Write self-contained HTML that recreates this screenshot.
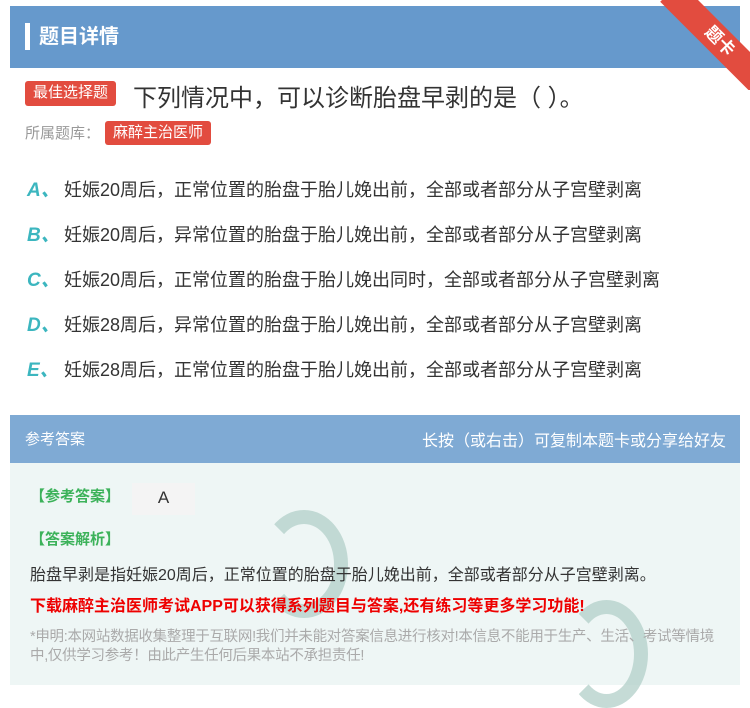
<!DOCTYPE html><html><head><meta charset="utf-8"><style>
body{margin:0;width:750px;height:685px;background:#fff;font-family:"Liberation Sans","Noto Sans CJK SC",sans-serif;position:relative;overflow:hidden}
.a{position:absolute;white-space:nowrap}
.hd{left:10px;top:6px;width:730px;height:62px;background:#6699cc}
.tag{background:#e24c3f;color:#fff;border-radius:3px}
.opt{font-size:18px;color:#333;left:27px}
.opt b{color:#3cb6bf;font-style:italic;font-size:19px;display:inline-block;width:37px;font-weight:bold}
</style></head><body>
<div class="a hd"></div>
<div class="a" style="left:25px;top:23px;width:5px;height:27px;background:#fff"></div>
<div class="a" style="left:39px;top:20px;color:#fff;font-size:20px;font-weight:bold">题目详情</div>
<div class="a" style="left:660px;top:0;width:90px;height:90px;overflow:hidden"><div style="position:absolute;width:140px;height:28px;background:#e24c3f;transform:rotate(45deg);transform-origin:0 0;left:20px;top:-18px;color:#fff;font-size:17px;text-align:center;line-height:28px;font-weight:bold">题卡</div></div>
<div class="a tag" style="left:25px;top:81px;height:25px;padding:0 8px;font-size:15px;line-height:24px">最佳选择题</div>
<div class="a" style="left:133px;top:78px;font-size:24px;color:#333">下列情况中，可以诊断胎盘早剥的是（ ）。</div>
<div class="a" style="left:25px;top:122px;font-size:15px;color:#999">所属题库：</div>
<div class="a tag" style="left:105px;top:121px;height:24px;padding:0 8px;font-size:15px;line-height:23px">麻醉主治医师</div>
<div class="a opt" style="top:175px"><b>A、</b>妊娠20周后，正常位置的胎盘于胎儿娩出前，全部或者部分从子宫壁剥离</div>
<div class="a opt" style="top:220px"><b>B、</b>妊娠20周后，异常位置的胎盘于胎儿娩出前，全部或者部分从子宫壁剥离</div>
<div class="a opt" style="top:265px"><b>C、</b>妊娠20周后，正常位置的胎盘于胎儿娩出同时，全部或者部分从子宫壁剥离</div>
<div class="a opt" style="top:310px"><b>D、</b>妊娠28周后，异常位置的胎盘于胎儿娩出前，全部或者部分从子宫壁剥离</div>
<div class="a opt" style="top:355px"><b>E、</b>妊娠28周后，正常位置的胎盘于胎儿娩出前，全部或者部分从子宫壁剥离</div>
<div class="a" style="left:10px;top:415px;width:730px;height:48px;background:#7faad4"></div>
<div class="a" style="left:25px;top:428px;color:#fff;font-size:15px">参考答案</div>
<div class="a" style="right:24px;top:427px;color:#fff;font-size:16px">长按（或右击）可复制本题卡或分享给好友</div>
<div class="a" style="left:10px;top:463px;width:730px;height:222px;background:#eef6f5"></div>
<div class="a" style="left:260px;top:510px;width:60px;height:80px;border-radius:50%;border:14px solid #b7d3cc;border-left-color:transparent;opacity:.8"></div>
<div class="a" style="left:565px;top:600px;width:55px;height:80px;border-radius:50%;border:14px solid #b7d3cc;border-left-color:transparent;opacity:.8"></div>
<div class="a" style="left:30px;top:485px;color:#3cb25a;font-size:15px;font-weight:bold">【参考答案】</div>
<div class="a" style="left:132px;top:483px;width:63px;height:32px;background:#f4f4f4;font-size:17px;color:#333;text-align:center;line-height:30px">A</div>
<div class="a" style="left:30px;top:528px;color:#3cb25a;font-size:15px;font-weight:bold">【答案解析】</div>
<div class="a" style="left:30px;top:561px;color:#333;font-size:16px">胎盘早剥是指妊娠20周后，正常位置的胎盘于胎儿娩出前，全部或者部分从子宫壁剥离。</div>
<div class="a" style="left:30px;top:592px;color:#e00;font-size:16px;font-weight:bold">下载麻醉主治医师考试APP可以获得系列题目与答案,还有练习等更多学习功能!</div>
<div class="a" style="left:30px;top:628px;color:#aaa;font-size:14.5px;line-height:19px;white-space:normal;width:700px;letter-spacing:-0.3px">*申明:本网站数据收集整理于互联网!我们并未能对答案信息进行核对!本信息不能用于生产、生活、考试等情境中,仅供学习参考！由此产生任何后果本站不承担责任!</div>
</body></html>
